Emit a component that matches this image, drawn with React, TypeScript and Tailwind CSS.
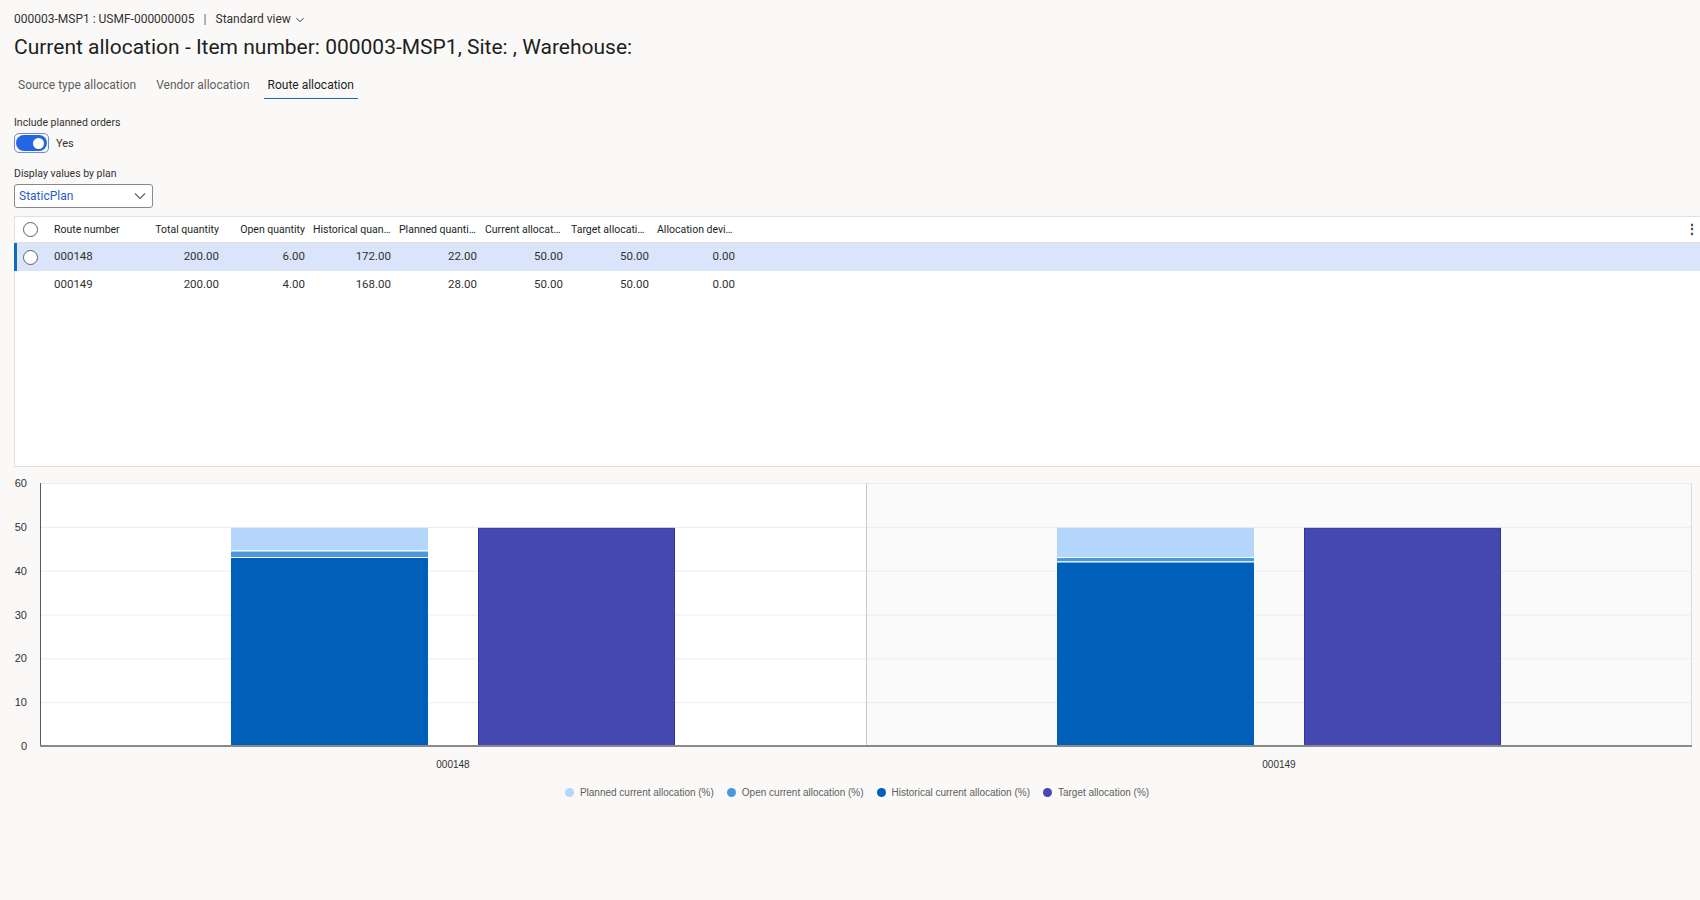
import React from "react";

interface RouteRow {
  route: string;
  total: string;
  open: string;
  hist: string;
  planned: string;
  cur: string;
  target: string;
  dev: string;
  selected: boolean;
}

const rows: RouteRow[] = [
  { route: "000148", total: "200.00", open: "6.00", hist: "172.00", planned: "22.00", cur: "50.00", target: "50.00", dev: "0.00", selected: true },
  { route: "000149", total: "200.00", open: "4.00", hist: "168.00", planned: "28.00", cur: "50.00", target: "50.00", dev: "0.00", selected: false },
];

const numCols: { key: keyof RouteRow; label: string }[] = [
  { key: "total", label: "Total quantity" },
  { key: "open", label: "Open quantity" },
  { key: "hist", label: "Historical quantity" },
  { key: "planned", label: "Planned quantity" },
  { key: "cur", label: "Current allocation (%)" },
  { key: "target", label: "Target allocation (%)" },
  { key: "dev", label: "Allocation deviation" },
];

// chart data in % of total allocation
const groups = [
  { label: "000148", hist: 43, open: 1.5, planned: 5.5, target: 50 },
  { label: "000149", hist: 42, open: 1, planned: 7, target: 50 },
];

const C = {
  planned: "#b3d6fa",
  open: "#4a98e0",
  hist: "#005fb8",
  target: "#4349ae",
};

function Radio() {
  return <span className="block w-[15px] h-[15px] rounded-full border border-[#605e5c] bg-white" />;
}

function AllocationChart() {
  const top = 16;
  const bottom = 279;
  const unit = (bottom - top) / 60;
  const left = 40;
  const band = 826;
  const y = (v: number) => bottom - v * unit;

  return (
    <svg width="1700" height="320" className="block" style={{ fontFamily: "'Liberation Sans', Arial, sans-serif" }}>
      <rect x={left} y={top} width={band} height={bottom - top} fill="#ffffff" />
      <rect x={left + band} y={top} width={band} height={bottom - top} fill="#fafafa" />
      {[0, 10, 20, 30, 40, 50, 60].map((v) => (
        <g key={v}>
          {v > 0 && <line x1={left} x2={left + band * 2} y1={y(v) + 0.5} y2={y(v) + 0.5} stroke="#ececec" />}
          <text x={27} y={y(v) + 4} textAnchor="end" fontSize="11" fill="#323130">
            {v}
          </text>
        </g>
      ))}
      <line x1={left + band + 0.5} x2={left + band + 0.5} y1={top} y2={bottom} stroke="#c8c8c8" />
      <line x1={left + band * 2 - 0.5} x2={left + band * 2 - 0.5} y1={top} y2={bottom} stroke="#dcdcdc" />
      {groups.map((g, i) => {
        const x0 = left + i * band;
        const b1 = x0 + 191;
        const b2 = x0 + 438;
        const w = 197;
        const hTop = y(g.hist);
        const oTop = y(g.hist + g.open);
        const pTop = y(g.hist + g.open + g.planned);
        return (
          <g key={g.label}>
            <rect x={b1} y={hTop} width={w} height={bottom - hTop} fill={C.hist} />
            <rect x={b1} y={oTop} width={w} height={hTop - oTop} fill={C.open} />
            <rect x={b1} y={pTop + 1} width={w} height={oTop - pTop - 1} fill={C.planned} />
            <line x1={b1} x2={b1 + w} y1={hTop} y2={hTop} stroke="#ffffff" strokeWidth="1.2" />
            <line x1={b1} x2={b1 + w} y1={oTop} y2={oTop} stroke="#ffffff" strokeWidth="1.2" />
            <rect x={b2 + 0.5} y={y(g.target) + 1.5} width={w - 1} height={bottom - y(g.target) - 1.5} fill={C.target} stroke="#2f33a6" strokeWidth="1" />
            <text x={x0 + band / 2} y={301} textAnchor="middle" fontSize="10" fill="#323130">
              {g.label}
            </text>
          </g>
        );
      })}
      <line x1={left + 0.5} x2={left + 0.5} y1={top} y2={bottom} stroke="#5a5a5a" />
      <line x1={left} x2={left + band * 2} y1={bottom} y2={bottom} stroke="#8a8a8a" strokeWidth="2" />
    </svg>
  );
}

export default function App() {
  return (
    <div
      className="w-full h-[900px] bg-[#faf9f8] text-[#323130] overflow-hidden"
      style={{ fontFamily: "Roboto, 'Noto Sans', Arial, sans-serif" }}
    >
      {/* Breadcrumb */}
      <div className="flex items-center pl-[14px] pt-[11px] h-[27px] text-[12px] text-[#323130]">
        <span>000003-MSP1 : USMF-000000005</span>
        <span className="mx-[9px] text-[#605e5c]">|</span>
        <span>Standard view</span>
        <svg width="10" height="10" viewBox="0 0 10 10" className="ml-[4px] mt-[1px]">
          <path d="M1.5 3.2 L5 6.7 L8.5 3.2" fill="none" stroke="#323130" strokeWidth="1" />
        </svg>
      </div>

      {/* Title */}
      <h1 className="pl-[14px] mt-[6px] text-[21px] leading-[28px] font-normal text-[#201f1e]">
        Current allocation - Item number: 000003-MSP1, Site: , Warehouse:
      </h1>

      {/* Tabs */}
      <div className="flex pl-[14px] mt-[12px] gap-[4px] text-[12px] h-[29px]">
        {["Source type allocation", "Vendor allocation", "Route allocation"].map((t, i) => (
          <div
            key={t}
            className={`px-[4px] pt-[3px] pb-[4px] h-[26px] ${i === 2 ? "border-b-[1.5px] border-[#0f6cbd] text-[#201f1e]" : "border-b-[1.5px] border-transparent text-[#605e5c]"} ${i === 0 ? "mr-[8px]" : "mr-[6px]"}`}
          >
            {t}
          </div>
        ))}
      </div>

      {/* Filters */}
      <div className="pl-[14px] mt-[14px]">
        <div className="text-[10.5px] leading-[14px] text-[#323130]">Include planned orders</div>
        <div className="flex items-center mt-[3px] h-[20px]">
          <div className="w-[35px] h-[20px] rounded-[5px] border border-[#6b8bd8] p-[1px]">
            <div className="w-full h-full rounded-full bg-[#2266e3] flex items-center justify-end pr-[3px]">
              <span className="block w-[11px] h-[11px] rounded-full bg-white" />
            </div>
          </div>
          <span className="ml-[7px] mt-[2px] text-[11px]">Yes</span>
        </div>
        <div className="mt-[14px] text-[10.5px] leading-[14px] text-[#323130]">Display values by plan</div>
        <div className="mt-[3px] w-[139px] h-[24px] border border-[#8a8886] rounded-[3px] bg-white flex items-center justify-between pl-[4px] pr-[6px]">
          <span className="text-[12px] text-[#2a5cc6]">StaticPlan</span>
          <svg width="12" height="8" viewBox="0 0 12 8">
            <path d="M1 1.5 L6 6.5 L11 1.5" fill="none" stroke="#605e5c" strokeWidth="1.1" />
          </svg>
        </div>
      </div>

      {/* Grid */}
      <div className="ml-[14px] mt-[8px] h-[251px] bg-white border border-[#e1dfdd] border-r-0">
        <div className="flex items-center h-[26px] border-b border-[#e1dfdd] text-[10.5px] text-[#201f1e] relative">
          <div className="w-[31px] flex justify-center">
            <Radio />
          </div>
          <div className="w-[87px] pl-[8px] truncate">Route number</div>
          {numCols.map((c) => (
            <div key={c.key} className="w-[86px] pl-[8px] text-right truncate shrink-0">
              {c.label}
            </div>
          ))}
          <span className="absolute right-[2px] top-[6px] text-[#323130] text-[12px] leading-[12px] font-bold">⋮</span>
        </div>
        {rows.map((r) => (
          <div
            key={r.route}
            className={`flex items-center h-[28px] text-[11.5px] relative ${r.selected ? "bg-[#dae5fb]" : ""}`}
          >
            {r.selected && <span className="absolute left-[-1px] top-0 bottom-0 w-[3px] bg-[#0f6cbd]" />}
            <div className="w-[31px] flex justify-center">{r.selected && <Radio />}</div>
            <div className="w-[87px] pl-[8px]">{r.route}</div>
            {numCols.map((c) => (
              <div key={c.key} className="w-[86px] pl-[8px] text-right shrink-0">
                {r[c.key] as string}
              </div>
            ))}
          </div>
        ))}
      </div>

      {/* Chart */}
      <AllocationChart />

      {/* Legend */}
      <div
        className="flex justify-center pl-[14px] -mt-[2px] gap-[13px] text-[10px] text-[#605e5c]"
        style={{ fontFamily: "'Liberation Sans', Arial, sans-serif" }}
      >
        {[
          ["Planned current allocation (%)", C.planned],
          ["Open current allocation (%)", C.open],
          ["Historical current allocation (%)", C.hist],
          ["Target allocation (%)", C.target],
        ].map(([label, color]) => (
          <div key={label} className="flex items-center gap-[6px]">
            <span className="block w-[9px] h-[9px] rounded-full" style={{ backgroundColor: color }} />
            <span>{label}</span>
          </div>
        ))}
      </div>
    </div>
  );
}
